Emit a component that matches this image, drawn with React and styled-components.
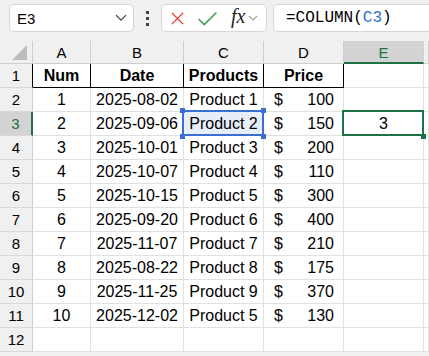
import React from "react";
import styled, { createGlobalStyle } from "styled-components";

const GREEN = "#1e7145";
const BLUE = "#3a6fd1";

const rows = [
  [1, "2025-08-02", "Product 1", 100],
  [2, "2025-09-06", "Product 2", 150],
  [3, "2025-10-01", "Product 3", 200],
  [4, "2025-10-07", "Product 4", 110],
  [5, "2025-10-15", "Product 5", 300],
  [6, "2025-09-20", "Product 6", 400],
  [7, "2025-11-07", "Product 7", 210],
  [8, "2025-08-22", "Product 8", 175],
  [9, "2025-11-25", "Product 9", 370],
  [10, "2025-12-02", "Product 5", 130],
];

const GlobalStyle = createGlobalStyle`
  html, body {
    margin: 0;
    padding: 0;
    background: #f0f0f0;
  }
  body {
    width: 429px;
    height: 356px;
    overflow: hidden;
    font-family: "Liberation Sans", Arial, sans-serif;
    color: #000;
  }
`;

const TopBar = styled.div`
  display: flex;
  align-items: center;
  height: 41px;
  padding: 4px 0 9px 9px;
  box-sizing: border-box;
  & > * {
    flex-shrink: 0;
  }
`;

const Box = styled.div`
  height: 28px;
  box-sizing: border-box;
  background: #fff;
  border: 1px solid #d6d6d6;
  border-radius: 5px;
  display: flex;
  align-items: center;
`;

const NameBox = styled(Box)`
  width: 125px;
  justify-content: space-between;
  padding: 0 6px 0 7px;
  font-size: 15px;
`;

const Dots = styled.div`
  width: 27px;
  display: flex;
  flex-direction: column;
  align-items: center;
  gap: 3px;
  span {
    width: 3px;
    height: 3px;
    background: #444;
  }
`;

const Actions = styled(Box)`
  width: 106px;
  padding: 0 0 0 8px;
`;

const Fx = styled.span`
  font-family: "Liberation Serif", "DejaVu Serif", serif;
  font-style: italic;
  font-size: 20px;
  margin: -3px 3px 0 13px;
  color: #222;
`;

const FormulaBox = styled(Box)`
  width: 170px;
  margin-left: 6px;
  padding-left: 12px;
  font-family: "Liberation Mono", "DejaVu Sans Mono", monospace;
  font-size: 16px;
`;

const Ref = styled.span`
  color: #2f6fcf;
`;

const Sheet = styled.div`
  display: grid;
  grid-template-columns: 33px 58px 93px 80px 80px 80px 1fr;
  grid-template-rows: 23px;
  grid-auto-rows: 24px;
  background: #fff;
`;

const Corner = styled.div`
  background: #f0f0f0;
  border-right: 1px solid #cfcfcf;
  border-bottom: 1px solid #cfcfcf;
  display: flex;
  align-items: flex-end;
  justify-content: flex-end;
  padding: 0 5px 3px 0;
  box-sizing: border-box;
  &::before {
    content: "";
    width: 0;
    height: 0;
    border-left: 15px solid transparent;
    border-bottom: 15px solid #bdbdbd;
  }
`;

const ColHead = styled.div`
  background: ${(p) => (p.$active ? "#d3d3d3" : "#f0f0f0")};
  color: ${(p) => (p.$active ? GREEN : "#000")};
  border-right: 1px solid #cfcfcf;
  border-bottom: ${(p) => (p.$active ? `2px solid ${GREEN}` : "1px solid #cfcfcf")};
  box-sizing: border-box;
  display: flex;
  align-items: center;
  justify-content: center;
  font-size: 15px;
  padding-top: 1px;
`;

const RowHead = styled.div`
  background: ${(p) => (p.$active ? "#d3d3d3" : "#f0f0f0")};
  color: ${(p) => (p.$active ? GREEN : "#000")};
  border-right: ${(p) =>
    p.$active ? `2px solid ${GREEN}` : p.$edge ? "1px solid #000" : "1px solid #cfcfcf"};
  border-bottom: 1px solid #d9d9d9;
  box-sizing: border-box;
  display: flex;
  align-items: center;
  justify-content: center;
  font-size: 15px;
`;

const Cell = styled.div`
  position: ${(p) => (p.$mark ? "relative" : "static")};
  background: ${(p) => (p.$mark === "ref" ? "#e8eef9" : "#fff")};
  border-right: 1px solid ${(p) => (p.$head ? "#000" : "#e1e1e1")};
  border-bottom: 1px solid ${(p) => (p.$head ? "#000" : "#e1e1e1")};
  box-sizing: border-box;
  display: flex;
  align-items: center;
  justify-content: ${(p) => p.$justify || "center"};
  padding: ${(p) => p.$pad || "0"};
  font-size: 16px;
  font-weight: ${(p) => (p.$head ? 700 : 400)};
  white-space: nowrap;
`;

const Outline = styled.span`
  position: absolute;
  top: -2px;
  left: -2px;
  right: -1px;
  bottom: -1px;
  border: 2px solid ${(p) => p.$color};
  pointer-events: none;
`;

const Handle = styled.span`
  position: absolute;
  width: 5px;
  height: 5px;
  background: ${(p) => p.$color};
  ${(p) => (p.$v === "top" ? "top: -4px;" : "bottom: -4px;")}
  ${(p) => (p.$h === "left" ? "left: -4px;" : "right: -3px;")}
  z-index: 2;
`;

const Chevron = ({ size = 12, color = "#444" }) => (
  <svg width={size} height={size * 0.6} viewBox="0 0 12 7">
    <path d="M1 1l5 5 5-5" fill="none" stroke={color} strokeWidth="1.3" />
  </svg>
);

const Price = ({ value }) => (
  <Cell $justify="space-between" $pad="0 9px 0 10px">
    <span>$</span>
    <span>{value}</span>
  </Cell>
);

export default function App() {
  const cols = ["A", "B", "C", "D", "E", ""];
  return (
    <>
      <GlobalStyle />
      <TopBar>
        <NameBox>
          <span>E3</span>
          <Chevron />
        </NameBox>
        <Dots>
          <span />
          <span />
          <span />
        </Dots>
        <Actions>
          <svg width="15" height="15" viewBox="0 0 16 16">
            <path d="M2 2l12 12M14 2L2 14" stroke="#e5393b" strokeWidth="1.5" fill="none" />
          </svg>
          <svg width="21" height="15" viewBox="0 0 22 16" style={{ marginLeft: 12 }}>
            <path d="M1.5 8.5l6 6L20.5 1.5" stroke="#3e9b4f" strokeWidth="1.6" fill="none" />
          </svg>
          <Fx>fx</Fx>
          <Chevron size={10} color="#999" />
        </Actions>
        <FormulaBox>
          =COLUMN(<Ref>C3</Ref>)
        </FormulaBox>
      </TopBar>
      <Sheet>
        <Corner />
        {cols.map((c) => (
          <ColHead key={c || "F"} $active={c === "E"}>
            {c}
          </ColHead>
        ))}

        <RowHead $edge>1</RowHead>
        <Cell $head>Num</Cell>
        <Cell $head>Date</Cell>
        <Cell $head>Products</Cell>
        <Cell $head>Price</Cell>
        <Cell />
        <Cell />

        {rows.map(([n, date, prod, price], i) => {
          const r = i + 2;
          const isThree = r === 3;
          return (
            <React.Fragment key={r}>
              <RowHead $active={isThree}>{r}</RowHead>
              <Cell>{n}</Cell>
              <Cell>{date}</Cell>
              <Cell $mark={isThree ? "ref" : undefined}>
                {prod}
                {isThree && (
                  <>
                    <Outline $color={BLUE} />
                    <Handle $color={BLUE} $v="top" $h="left" />
                    <Handle $color={BLUE} $v="top" $h="right" />
                    <Handle $color={BLUE} $v="bottom" $h="left" />
                    <Handle $color={BLUE} $v="bottom" $h="right" />
                  </>
                )}
              </Cell>
              <Price value={price} />
              <Cell $mark={isThree ? "active" : undefined}>
                {isThree && (
                  <>
                    3
                    <Outline $color={GREEN} />
                    <Handle $color={GREEN} $v="bottom" $h="right" />
                  </>
                )}
              </Cell>
              <Cell />
            </React.Fragment>
          );
        })}

        <RowHead>12</RowHead>
        <Cell />
        <Cell />
        <Cell />
        <Cell />
        <Cell />
        <Cell />
      </Sheet>
    </>
  );
}
